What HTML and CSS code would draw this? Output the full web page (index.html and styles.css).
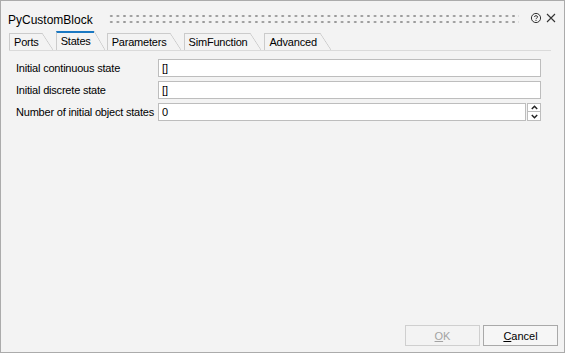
FILE: index.html
```html
<!DOCTYPE html>
<html lang="en">
<head>
  <meta charset="UTF-8">
  <title>PyCustomBlock</title>
  <link rel="stylesheet" href="styles.css">
</head>
<body>

  <div class="dialog">

    <div class="titlebar">
      <span class="title">PyCustomBlock</span>
      <div class="grip"></div>
      <svg class="help" width="12" height="12" viewBox="0 0 12 12">
        <circle cx="6" cy="6" r="4.6" fill="none" stroke="#333" stroke-width="1"/>
        <path d="M4.4 4.9 C4.4 3.3 7.6 3.3 7.6 4.9 C7.6 6 6 6 6 7.2" fill="none" stroke="#333" stroke-width="1"/>
        <rect x="5.5" y="8" width="1" height="1" fill="#333"/>
      </svg>
      <svg class="close" width="10" height="10" viewBox="0 0 10 10">
        <path d="M1 1 L9 9 M9 1 L1 9" stroke="#333" stroke-width="1.1"/>
      </svg>
    </div>

    <div class="tabs">
      <div class="tab"><span class="tab-label">Ports</span><span class="tab-slant"></span></div>
      <div class="tab active"><span class="tab-label">States</span><span class="tab-slant"></span></div>
      <div class="tab"><span class="tab-label">Parameters</span><span class="tab-slant"></span></div>
      <div class="tab"><span class="tab-label">SimFunction</span><span class="tab-slant"></span></div>
      <div class="tab"><span class="tab-label">Advanced</span><span class="tab-slant"></span></div>
    </div>

    <div class="pane">
      <label>Initial continuous state</label>
      <input type="text" value="[]">

      <label>Initial discrete state</label>
      <input type="text" value="[]">

      <label>Number of initial object states</label>
      <div class="spinbox">
        <input type="text" value="0">
        <div class="spin">
          <span class="spin-btn">
            <svg width="7" height="5" viewBox="0 0 7 5"><path d="M0.8 4 L3.5 1.3 L6.2 4" fill="none" stroke="#222" stroke-width="1.5"/></svg>
          </span>
          <span class="spin-btn">
            <svg width="7" height="5" viewBox="0 0 7 5"><path d="M0.8 1 L3.5 3.7 L6.2 1" fill="none" stroke="#222" stroke-width="1.5"/></svg>
          </span>
        </div>
      </div>
    </div>

    <div class="buttons">
      <button class="btn" disabled><u>O</u>K</button>
      <button class="btn"><u>C</u>ancel</button>
    </div>

  </div>

</body>
</html>
```

FILE: styles.css
```css
html, body {
  margin: 0;
  padding: 0;
  background: #f3f3f3;
}

body {
  font-family: "Liberation Sans", Arial, sans-serif;
  font-size: 11px;
  letter-spacing: -0.2px;
  color: #000;
}

.dialog {
  width: 565px;
  height: 353px;
  box-sizing: border-box;
  border: 1px solid #ababab;
  background: #f3f3f3;
  display: flex;
  flex-direction: column;
}

/* Barre de titre */
.titlebar {
  height: 30px;
  box-sizing: border-box;
  padding: 12px 8px 0 7px;
  display: flex;
  align-items: flex-start;
}

.title {
  font-size: 12px;
  letter-spacing: 0;
  line-height: 14px;
}

.grip {
  flex: 1;
  height: 12px;
  margin: 0 11px 0 15px;
  background-image: radial-gradient(circle, #999 1px, transparent 1.3px);
  background-size: 6.6px 6px;
}

.help {
  margin-top: -1px;
}

.close {
  margin-left: 4px;
}

/* Onglets */
.tabs {
  display: flex;
  align-items: flex-end;
  height: 20px;
  box-sizing: border-box;
  margin: 0 13px 0 8px;
  border-bottom: 1px solid #dadada;
}

.tab {
  display: flex;
  height: 17px;
  margin-right: 3px;
}

.tab-label {
  border-left: 1px solid #cbcbcb;
  border-top: 1px solid #cbcbcb;
  padding: 2px 3px 0 4px;
  line-height: 13px;
}

.tab-slant {
  width: 11px;
  background: linear-gradient(to top right, transparent calc(50% - 0.7px), #cbcbcb 50%, transparent calc(50% + 0.7px));
}

.tab.active {
  height: 19px;
  margin-right: 2px;
}

.tab.active .tab-label {
  border-top: 2px solid #1a78c2;
}

/* Formulaire */
.pane {
  display: grid;
  grid-template-columns: 142px 1fr;
  row-gap: 4px;
  align-items: center;
  padding: 8px 23px 0 15px;
}

.pane label {
  line-height: 13px;
}

.pane input {
  height: 18px;
  box-sizing: border-box;
  margin: 0;
  border: 1px solid #bdbdbd;
  background: #fff;
  padding: 0 3px;
  font-family: inherit;
  font-size: 11px;
  letter-spacing: 0;
  color: #000;
  outline: none;
}

.spinbox {
  display: flex;
}

.spinbox input {
  flex: 1;
  min-width: 0;
}

.spin {
  display: flex;
  flex-direction: column;
  margin-left: 1px;
}

.spin-btn {
  width: 14px;
  height: 9px;
  box-sizing: border-box;
  border: 1px solid #bdbdbd;
  background: #fff;
  display: flex;
  align-items: center;
  justify-content: center;
}

.spin-btn + .spin-btn {
  border-top: none;
}

/* Boutons */
.buttons {
  margin-top: auto;
  display: flex;
  justify-content: flex-end;
  gap: 3px;
  padding: 0 6px 6px 0;
}

.btn {
  width: 75px;
  height: 21px;
  box-sizing: border-box;
  border: 1px solid #a9a9a9;
  background: #f6f6f6;
  font-family: inherit;
  font-size: 11px;
  letter-spacing: 0;
  color: #000;
  padding: 0;
}

.btn:disabled {
  border-color: #cfcfcf;
  color: #a3a3a3;
  background: #f3f3f3;
}
```
